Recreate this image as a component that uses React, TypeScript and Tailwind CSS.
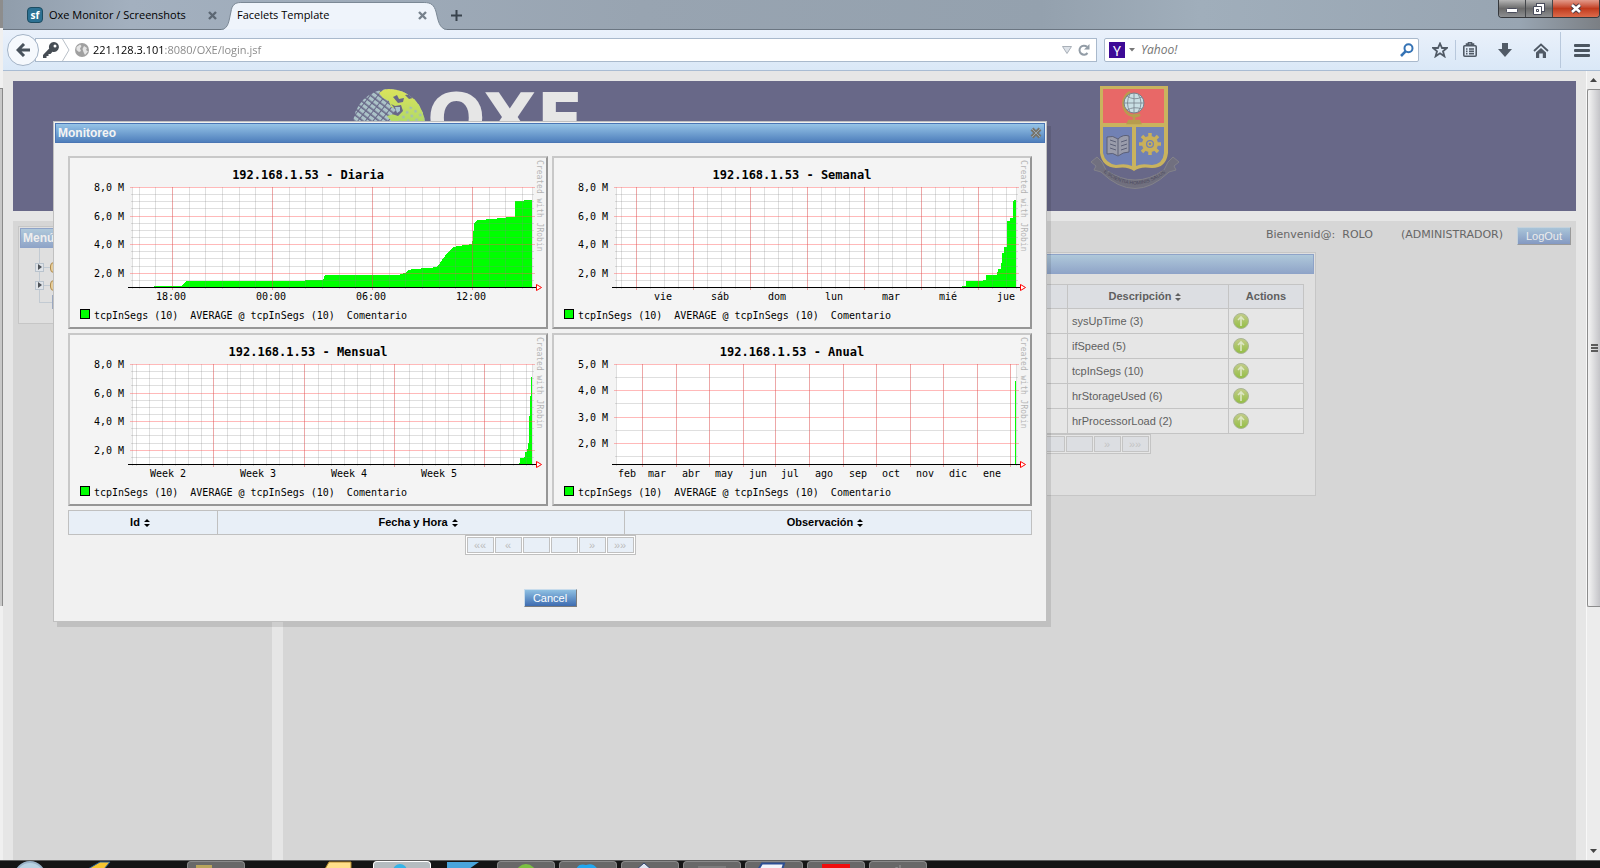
import React from "react";

type ChartProps = {
  title: string;
  yMajor: { y: number; label: string }[];
  yMinor: number[];
  xMajor: number[];
  xMinor: number[];
  xLabels: { x: number; label: string }[];
  area: string;
};

const range = (from: number, to: number, step: number) => {
  const out: number[] = [];
  for (let v = from; v <= to; v += step) out.push(Math.round(v));
  return out;
};

const millions = [
  { y: 31, label: "8,0 M" },
  { y: 60, label: "6,0 M" },
  { y: 88, label: "4,0 M" },
  { y: 117, label: "2,0 M" },
];
const halfMillions = [38, 45, 52, 67, 74, 81, 95, 102, 110, 124];

const charts: ChartProps[] = [
  {
    title: "192.168.1.53 - Diaria",
    yMajor: millions,
    yMinor: halfMillions,
    xMajor: [104, 204, 304, 404],
    xMinor: [71, 87, 121, 137, 154, 171, 187, 221, 237, 254, 271, 287, 321, 337, 354, 371, 387, 421, 437, 454],
    xLabels: [
      { x: 103, label: "18:00" },
      { x: 203, label: "00:00" },
      { x: 303, label: "06:00" },
      { x: 403, label: "12:00" },
    ],
    area: "M86 131V130H114L118 125H237V124H255L257 119H330L337 117L340 114L345 113L360 112L369 111L372 107L377 100L385 91L397 89L404 88L405 83L406 67L410 64L425 63L433 62L443 61H447V45H456V44H464V131Z",
  },
  {
    title: "192.168.1.53 - Semanal",
    yMajor: millions,
    yMinor: halfMillions,
    xMajor: [84, 141, 198, 255, 312, 369, 426],
    xMinor: [69, 98, 112, 126, 155, 169, 183, 212, 226, 240, 269, 283, 297, 326, 340, 354, 383, 397, 411, 440, 454],
    xLabels: [
      { x: 111, label: "vie" },
      { x: 168, label: "sáb" },
      { x: 225, label: "dom" },
      { x: 282, label: "lun" },
      { x: 339, label: "mar" },
      { x: 396, label: "mié" },
      { x: 454, label: "jue" },
    ],
    area: "M410 131V130H414V125H431V124H434V119H445V116H446V113H449V107H450V97H452V91H455V65H458V62H461V45H462V44H464V131Z",
  },
  {
    title: "192.168.1.53 - Mensual",
    yMajor: millions,
    yMinor: halfMillions,
    xMajor: [145, 236, 326, 416],
    xMinor: range(68, 460, 13).filter((x) => ![145, 146, 237, 328, 419].includes(x)),
    xLabels: [
      { x: 100, label: "Week 2" },
      { x: 190, label: "Week 3" },
      { x: 281, label: "Week 4" },
      { x: 371, label: "Week 5" },
    ],
    area: "M451 131V130H452V125H456V124H457V119H459V116H460V110H461V83H462V63H463V44H464V131Z",
  },
  {
    title: "192.168.1.53 - Anual",
    yMajor: [
      { y: 31, label: "5,0 M" },
      { y: 57, label: "4,0 M" },
      { y: 84, label: "3,0 M" },
      { y: 110, label: "2,0 M" },
    ],
    yMinor: [44, 70, 97, 123],
    xMajor: [90, 124, 157, 191, 223, 257, 291, 324, 358, 391, 425, 458],
    xMinor: [],
    xLabels: [
      { x: 75, label: "feb" },
      { x: 105, label: "mar" },
      { x: 139, label: "abr" },
      { x: 172, label: "may" },
      { x: 206, label: "jun" },
      { x: 238, label: "jul" },
      { x: 272, label: "ago" },
      { x: 306, label: "sep" },
      { x: 339, label: "oct" },
      { x: 373, label: "nov" },
      { x: 406, label: "dic" },
      { x: 440, label: "ene" },
    ],
    area: "M463 131V48H464V131Z",
  },
];

const Chart = ({ title, yMajor, yMinor, xMajor, xMinor, xLabels, area }: ChartProps) => (
  <div className="border-2 border-t-[#c8c8c8] border-r-[#969696] border-b-[#969696] border-l-[#c8c8c8] bg-[#f4f4f4]">
    <svg viewBox="2 2 476 169" className="block w-full font-['DejaVu_Sans_Mono',monospace] text-[10px]">
      <rect x="64" y="31" width="401" height="100" fill="#fff" />
      <path d={area} fill="#00ff00" shapeRendering="crispEdges" />
      <g fill="#828282" fillOpacity="0.26">
        {yMinor.map((y) => (
          <rect key={y} x="63" y={y} width="403" height="1" />
        ))}
        {[64, ...xMinor, 464].map((x) => (
          <rect key={x} x={x} y="31" width="1" height="102" />
        ))}
      </g>
      <g fill="#ff5050" fillOpacity="0.4">
        {yMajor.map(({ y }) => (
          <rect key={y} x="62" y={y} width="405" height="1" />
        ))}
      </g>
      <g fill="#dc5050" fillOpacity="0.5">
        {xMajor.map((x) => (
          <rect key={x} x={x} y="31" width="1" height="103" />
        ))}
      </g>
      <rect x="60" y="131" width="408" height="1" fill="#000" />
      <path d="M468.5 128.5L473.5 131.5L468.5 134.5Z" fill="#fff" stroke="#ff0000" />
      <text x="240" y="23" textAnchor="middle" className="text-[12px] font-bold">
        {title}
      </text>
      {yMajor.map(({ y, label }) => (
        <text key={y} x="56" y={y + 4} textAnchor="end">
          {label}
        </text>
      ))}
      {xLabels.map(({ x, label }) => (
        <text key={x} x={x} y="144" textAnchor="middle">
          {label}
        </text>
      ))}
      <rect x="12.5" y="153.5" width="9" height="9" fill="#00ff00" stroke="#000" />
      <text x="26" y="163" xmlSpace="preserve">
        {"tcpInSegs (10)  AVERAGE @ tcpInSegs (10)  Comentario"}
      </text>
      <text transform="translate(469 4) rotate(90)" fill="#b4b4b4" className="text-[8px]">
        Created with JRobin
      </text>
    </svg>
  </div>
);

const SortIcon = () => (
  <svg viewBox="0 0 6 8" className="mr-1.5 ml-1 inline-block h-2 w-1.5" fill="currentColor">
    <path d="M0 3L3 0L6 3ZM0 5H6L3 8Z" />
  </svg>
);

const Pager = ({ dim = false }: { dim?: boolean }) => (
  <div
    className={
      dim
        ? "mx-auto flex w-fit gap-px border border-[#c4c4c4] bg-[#e6e6e6] p-px text-[#c4c4c4]"
        : "mx-auto flex w-fit gap-px border border-[#c0c0c0] bg-white p-px text-[#bcbcbc]"
    }
  >
    {["««", "«", "", "", "»", "»»"].map((label, i) => (
      <button
        key={i}
        type="button"
        aria-label={`Page control ${i + 1}`}
        className={
          dim
            ? "h-4 w-[27px] border border-[#c4c4c4] bg-[#dcdee2] text-[11px] leading-[14px]"
            : "h-4 w-[27px] border border-[#c0c0c0] bg-[#e8eff7] text-[11px] leading-[14px]"
        }
      >
        {label}
      </button>
    ))}
  </div>
);

const CloseMark = ({ className = "" }: { className?: string }) => (
  <svg viewBox="0 0 9 9" className={`h-[9px] w-[9px] ${className}`} stroke="currentColor" strokeWidth="2.4">
    <path d="M1 1L8 8M8 1L1 8" />
  </svg>
);

const TabBar = () => (
  <div className="flex h-[30px] items-end border-b border-[#6b7682] bg-[linear-gradient(90deg,#909dab_0,#a3b0bf_8%,#98a4b1_40%,#94a1ae_65%,#a0aebb_75%,#98a5b2_95%,#7b7f84_100%)]">
    <div className="flex h-[28px] w-[195px] items-center pl-6">
      <span className="flex h-4 w-4 items-center justify-center rounded-sm border border-[#1d4c61] bg-[#2c7193] text-[10px] font-bold text-white">
        sf
      </span>
      <span className="ml-1.5 text-[11px] whitespace-nowrap text-black">Oxe Monitor / Screenshots</span>
    </div>
    <button type="button" aria-label="Close tab" className="mb-[9px] ml-[10px] text-[#5c6773]">
      <CloseMark />
    </button>
    <div className="relative -mb-px ml-1 flex h-[28px] w-[226px] items-center pb-px pl-4">
      <svg viewBox="0 0 228 28" preserveAspectRatio="none" className="absolute inset-0 h-full w-full">
        <path
          d="M0 27.5C8 27 8 18 10 10C11 3 14 .5 20 .5H205C212 .5 215 3 217 10C219 18 220 27 228 27.5V28H0Z"
          fill="#eff4fb"
          stroke="#7a8794"
        />
        <rect y="27" x="3" width="222" height="1" fill="#eaf1fb" />
      </svg>
      <span className="relative text-[11px] text-black">Facelets Template</span>
      <button type="button" aria-label="Close tab" className="relative mr-[20px] ml-auto text-[#77818c]">
        <CloseMark />
      </button>
    </div>
    <button type="button" aria-label="New tab" className="mb-2 ml-1 text-[#39434d]">
      <svg viewBox="0 0 11 11" className="h-[11px] w-[11px]" stroke="currentColor" strokeWidth="2">
        <path d="M5.5 0V11M0 5.5H11" />
      </svg>
    </button>
    <div className="ml-auto flex h-[18px] self-start overflow-hidden rounded-b border border-t-0 border-[#35383c]">
      <button type="button" aria-label="Minimize" className="flex w-[27px] items-center justify-center border-r border-[#44474b] bg-linear-to-b from-[#b5b5b5] via-[#6a6a6a] via-50% to-[#8d8f91]">
        <svg viewBox="0 0 12 5" className="mt-1 h-[5px] w-3">
          <rect x=".5" y=".5" width="11" height="4" rx="1" fill="#fff" stroke="#4a4d5c" />
        </svg>
      </button>
      <button type="button" aria-label="Restore" className="flex w-[27px] items-center justify-center border-r border-[#44474b] bg-linear-to-b from-[#b5b5b5] via-[#6a6a6a] via-50% to-[#8d8f91]">
        <svg viewBox="0 0 12 12" className="h-3 w-3" fill="#fff" stroke="#4a4d5c">
          <rect x="3.5" y=".5" width="8" height="8" />
          <path d="M.5 3.500H8.500V11.500H.5ZM3.500 6.500V8.500H5.500V6.500Z" fillRule="evenodd" />
        </svg>
      </button>
      <button type="button" aria-label="Close" className="flex w-[46px] items-center justify-center bg-linear-to-b from-[#e29a8a] via-[#c03a1c] via-50% to-[#dc6a4a]">
        <svg viewBox="0 0 12 11" className="h-[11px] w-3" fill="none">
          <path d="M2 2L10 9M10 2L2 9" stroke="#4a3a44" strokeWidth="4.500" />
          <path d="M2 2L10 9M10 2L2 9" stroke="#fff" strokeWidth="2.600" />
        </svg>
      </button>
    </div>
  </div>
);

const NavBar = () => (
  <div className="flex h-[41px] items-center border-b border-[#a9bcd3] bg-linear-to-b from-[#eaf1fb] to-[#dae8f7]">
    <button
      type="button"
      aria-label="Back"
      className="z-10 ml-1 flex h-8 w-8 items-center justify-center rounded-full border border-[#a3b3c6] bg-[#f6f9fd] text-[#48525c]"
    >
      <svg viewBox="0 0 14 14" className="h-3.5 w-3.5" fill="none" stroke="currentColor" strokeWidth="3">
        <path d="M8 1L2 7L8 13M2 7H14" />
      </svg>
    </button>
    <div className="-ml-1 flex h-6 flex-1 items-center border border-[#a9b9cc] bg-white pl-[7px]">
      <svg viewBox="0 0 16 16" className="h-4 w-4" fill="#464d54">
        <path d="M11 0A5 5 0 0 0 6.200 6.600L0 13V16H3.500V14H5.500V12H7.500L9.500 9.800A5 5 0 1 0 11 0ZM12 2.500A1.500 1.500 0 1 1 12 5.500A1.500 1.500 0 0 1 12 2.500Z" />
      </svg>
      <svg viewBox="0 0 8 22" className="ml-[3px] h-[22px] w-2" fill="none" stroke="#b9c0c8">
        <path d="M.5 0L7 11L.5 22" />
      </svg>
      <svg viewBox="0 0 14 14" className="ml-[5px] h-3.5 w-3.5">
        <circle cx="7" cy="7" r="7" fill="#a0a0a0" />
        <path d="M1.500 4L5 1.500L6.500 3L5 5.500L6 8L4 9L1.500 7ZM9 3L12 5L11 7L13 8.500L10 12L8.500 9L7.500 6Z" fill="#e4e4e4" />
      </svg>
      <input
        aria-label="Address"
        defaultValue="221.128.3.101:8080/OXE/login.jsf"
        className="ml-1 flex-1 bg-[linear-gradient(90deg,#000_72px,#858585_72px)] bg-clip-text text-[11px] text-transparent outline-none"
      />
      <button type="button" aria-label="History">
        <svg viewBox="0 0 10 8" className="h-2 w-2.5" fill="#dde2e8" stroke="#a9b0b8">
          <path d="M.5 .5H9.500L5 7.500Z" />
        </svg>
      </button>
      <button type="button" aria-label="Reload" className="mr-1.5 ml-1.5">
        <svg viewBox="0 0 12 12" className="h-3 w-3" fill="none" stroke="#929ca6" strokeWidth="2">
          <path d="M9.500 9A4.500 4.500 0 1 1 9 2.800" />
          <path d="M11.500 0V5.500H6Z" fill="#929ca6" stroke="none" />
        </svg>
      </button>
    </div>
    <div className="ml-[7px] flex h-6 w-[315px] items-center rounded-xs border border-[#a9b9cc] bg-white pl-1">
      <span className="flex h-4 w-4 items-center justify-center bg-[#3d0a96] font-['Noto_Sans',sans-serif] text-[14px] text-white">Y</span>
      <svg viewBox="0 0 6 4" className="ml-1 h-1 w-1.5" fill="#777">
        <path d="M0 0H6L3 3.500Z" />
      </svg>
      <input
        aria-label="Search"
        placeholder="Yahoo!"
        className="ml-1.5 min-w-0 flex-1 text-[12px] italic outline-none placeholder:text-[#757575]"
      />
      <svg viewBox="0 0 14 14" className="mr-1 h-3.5 w-3.5" fill="none" stroke="#3573b5" strokeWidth="2">
        <circle cx="8.500" cy="5.300" r="4" />
        <path d="M5.500 8.300L1 13" strokeWidth="2.600" />
      </svg>
    </div>
    <div className="ml-[13px] flex items-center text-[#505a66]">
      <button type="button" aria-label="Bookmark">
        <svg viewBox="0 0 16 16" className="h-4 w-4" fill="none" stroke="currentColor" strokeWidth="1.800">
          <path d="M8 1.500L10 6H14.800L11 9.200L12.400 14.300L8 11.300L3.600 14.300L5 9.200L1.200 6H6Z" />
        </svg>
      </button>
      <span className="ml-[7px] h-5 w-px bg-[#b8c8dc]" />
      <button type="button" aria-label="Bookmarks list" className="ml-[7px]">
        <svg viewBox="0 0 14 16" className="h-4 w-3.5" fill="none" stroke="currentColor" strokeWidth="1.600">
          <rect x=".8" y="3.800" width="12.400" height="10.400" rx="1" />
          <path d="M3.500 3V2H5.500V.8H8.500V2H10.500V3ZM3 7H4.500M6 7H11M3 9.300H4.500M6 9.300H11M3 11.600H4.500M6 11.600H11" />
        </svg>
      </button>
      <button type="button" aria-label="Downloads" className="ml-[21px]">
        <svg viewBox="0 0 14 14" className="h-3.5 w-3.5" fill="currentColor">
          <path d="M4 0H10V6H14L7 14L0 6H4Z" />
        </svg>
      </button>
      <button type="button" aria-label="Home" className="ml-[21px]">
        <svg viewBox="0 0 16 15" className="h-[15px] w-4" fill="none" stroke="currentColor" strokeWidth="1.800">
          <path d="M1 8L8 1.500L15 8" />
          <path d="M8 5L13 9.500V15H9.800V10.500H6.200V15H3V9.500Z" fill="currentColor" stroke="none" />
        </svg>
      </button>
    </div>
    <span className="ml-[11px] h-9 w-px bg-[#b8c8dc]" />
    <button type="button" aria-label="Menu" className="mr-2.5 ml-[13px] text-[#4b5560]">
      <svg viewBox="0 0 16 13" className="h-[13px] w-4" fill="currentColor">
        <rect width="16" height="3" rx="1" />
        <rect y="5" width="16" height="3" rx="1" />
        <rect y="10" width="16" height="3" rx="1" />
      </svg>
    </button>
  </div>
);

const GlobeLogo = () => (
  <svg viewBox="0 0 72 72" className="h-[72px] w-[72px]">
    <defs>
      <clipPath id="globe">
        <circle cx="36" cy="36" r="36" />
      </clipPath>
      <linearGradient id="land" x1="0" y1="0" x2="0" y2="1">
        <stop offset="0" stopColor="#dbe35c" />
        <stop offset=".6" stopColor="#a5d867" />
      </linearGradient>
      <pattern id="tiles" width="6" height="5" patternUnits="userSpaceOnUse" patternTransform="rotate(38)">
        <rect width="5" height="3.400" fill="#abc3c8" />
      </pattern>
      <pattern id="dots" width="6" height="6" patternUnits="userSpaceOnUse" patternTransform="rotate(38)">
        <circle cx="3" cy="3" r="1.500" fill="#a4bfae" />
      </pattern>
    </defs>
    <g clipPath="url(#globe)">
      <rect width="72" height="72" fill="url(#tiles)" />
      <path
        d="M26 4L32 0H50L57 8L62 7L72 28V72H44L40 34L34 27L41 25L44 20L38 18L36 12L30 9Z"
        fill="url(#land)"
      />
      <path d="M44 28L54 16L72 24V72H46Z" fill="url(#dots)" />
      <path
        d="M40 8L44 6L46 10L51 9L50 13L45 14ZM52 6L58 5L60 9L56 10ZM38 15L42 17L48 16L50 22L45 27L39 25L43 21Z"
        fill="#686888"
      />
      <path d="M42 18H47V22L44 24Z" fill="#a9c6cf" />
    </g>
  </svg>
);

const Crest = () => (
  <svg viewBox="0 0 90 106" className="h-[106px] w-[90px]">
    <path
      d="M1 76L7 71L12 76L16 84Q45 104 74 84L78 76L83 71L89 76L84 80L86 84L79 86Q45 119 11 86L4 84L6 80Z"
      fill="#71707f"
      stroke="#83828a"
    />
    <path id="ribbon" d="M11 84Q45 113 79 84" fill="none" />
    <text fill="#4c4a5e" className="text-[5px]">
      <textPath href="#ribbon" startOffset="3">
        E SCIENTIA HOMINIS SALUS
      </textPath>
    </text>
    <path d="M10 0H78V67Q76 82 62 82Q50 80 44 85Q38 80 26 82Q12 81 10 67Z" fill="#c9b35e" />
    <rect x="13" y="3" width="61" height="34" fill="#e86867" />
    <path d="M13 41H42V80Q36 77 26 79Q15 77 13 67Z" fill="#7181b4" />
    <path d="M46 41H74V67Q73 78 62 79Q51 77 46 80Z" fill="#7181b4" />
    <path d="M40 6A11 12 0 0 0 50 29H44V35H39L38 37H50L49 35H45" fill="none" stroke="#b79d4e" strokeWidth="2.400" />
    <circle cx="44" cy="17" r="10" fill="#c9dfe4" stroke="#77828c" />
    <path d="M34 17H54M44 7V27M37 10Q44 15 52 11M37 24Q44 20 52 23M40 8Q35 17 40 26M48 8Q54 17 48 26" fill="none" stroke="#77828c" strokeWidth=".8" />
    <path d="M17 51Q23 49 28 53Q33 48 39 50V66Q33 66 28 70Q23 66 17 68Z" fill="#9a9cab" stroke="#5c6077" />
    <path d="M28 53V69M20 54L26 56M20 58L26 60M20 62L26 64M31 56L37 54M31 60L37 58M31 64L37 62" stroke="#5c6077" />
    <g stroke="#c9b05a" fill="none">
      <circle cx="60" cy="58" r="6" strokeWidth="4" />
      <path d="M60 47V52M60 64V69M49 58H54M66 58H71M52 50L56 54M64 62L68 66M68 50L64 54M56 62L52 66" strokeWidth="3.500" />
      <circle cx="60" cy="58" r="2" strokeWidth="1.500" />
    </g>
  </svg>
);

const TreeToggle = () => (
  <button type="button" aria-label="Expand" className="flex h-[9px] w-[9px] items-center justify-center border border-[#b9c3cd] bg-[#dfe3e8]">
    <svg viewBox="0 0 4 6" className="h-1.5 w-1" fill="#4d5258">
      <path d="M0 0L4 3L0 6Z" />
    </svg>
  </button>
);

const SideMenu = () => (
  <aside className="w-[259px] bg-[#d6d6d6] px-[5px] pt-[5px]">
    <div className="h-[98px] border border-[#c6c6c6] bg-[#dfdfdf] p-px">
      <h2 className="h-5 border border-[#8ea3c8] bg-linear-to-b from-[#afc8da] to-[#90a5c8] pl-[2px] text-[12px] leading-[18px] font-bold text-[#eeeeee]">
        Menú
      </h2>
      <div className="ml-[19px] border-l border-[#c2cad2] pt-[10px]">
        {[0, 1].map((i) => (
          <div key={i} className="-ml-[5px] flex h-[18px] items-center">
            <TreeToggle />
            <span className="h-px w-[6px] bg-[#c2cad2]" />
            <span className="h-[11px] w-3.5 rounded-l-sm border border-[#b08d50] bg-[#e6cd9b]" />
          </div>
        ))}
        <div className="flex h-[9px] items-end">
          <span className="h-px w-3 bg-[#c2cad2]" />
          <span className="-mb-1.5 h-3.5 w-3 shrink-0 border border-[#9ba8c0] bg-[#e3e6ea]" />
        </div>
      </div>
    </div>
  </aside>
);

const variables = ["sysUpTime (3)", "ifSpeed (5)", "tcpInSegs (10)", "hrStorageUsed (6)", "hrProcessorLoad (2)"];

const VariablesPanel = () => (
  <section className="h-[244px] w-[502px] border border-[#c6c6c6] bg-[#dfdfdf] p-px">
    <div className="h-5 border border-[#8ea3c8] bg-linear-to-b from-[#afc8da] to-[#90a5c8]" />
    <div className="px-2.5 pt-2.5">
      <table className="w-full table-fixed border-collapse text-[11px] text-[#5f5f5f]">
        <thead>
          <tr className="h-6 bg-[#dcdee2]">
            <th className="border border-[#c4c4c4]" />
            <th className="w-[161px] border border-[#c4c4c4]">
              Descripción
              <SortIcon />
            </th>
            <th className="w-[75px] border border-[#c4c4c4]">Actions</th>
          </tr>
        </thead>
        <tbody className="bg-[#e6e6e6]">
          {variables.map((name) => (
            <tr key={name} className="h-[25px]">
              <td className="border border-[#c4c4c4]" />
              <td className="border border-[#c4c4c4] pl-1">{name}</td>
              <td className="border border-[#c4c4c4] pl-1">
                <button type="button" aria-label={`Monitor ${name}`} className="block">
                  <svg viewBox="0 0 16 16" className="h-4 w-4">
                    <defs>
                      <linearGradient id="orb" x1="0" y1="0" x2="0" y2="1">
                        <stop offset="0" stopColor="#c4cd8c" />
                        <stop offset="1" stopColor="#92bd42" />
                      </linearGradient>
                    </defs>
                    <circle cx="8" cy="8" r="7.500" fill="url(#orb)" stroke="#a9b595" />
                    <path d="M8 13V4M5 7L8 4L11 7" fill="none" stroke="#dde6c4" strokeWidth="1.600" />
                  </svg>
                </button>
              </td>
            </tr>
          ))}
        </tbody>
      </table>
      <Pager dim />
    </div>
  </section>
);

const MonitorDialog = () => (
  <div
    role="dialog"
    aria-label="Monitoreo"
    className="absolute top-[50px] left-[50px] w-[994px] max-w-full border border-[#c0c0c0] bg-[#f1f1f1] p-px pb-3.5 shadow-[4px_5px_0_#0000001a]"
  >
    <div className="flex h-5 items-center justify-between border border-[#4a76b4] bg-linear-to-b from-[#96c4e6] to-[#4f7fbc] pr-0.5 pl-[2px]">
      <h2 className="text-[12px] font-bold text-[#f4f4f4]">Monitoreo</h2>
      <button type="button" aria-label="Close dialog" className="text-[#77756c]">
        <svg viewBox="0 0 12 12" className="h-3 w-3" fill="none">
          <path d="M2 2L10 10M10 2L2 10" stroke="currentColor" strokeWidth="4" />
          <path d="M2 2L10 10M10 2L2 10" stroke="#98a7b3" />
        </svg>
      </button>
    </div>
    <div className="px-[13px] pt-[13px]">
      <div className="grid grid-cols-2 gap-1">
        {charts.map((chart) => (
          <Chart key={chart.title} {...chart} />
        ))}
      </div>
      <table className="mt-1 w-full table-fixed border-collapse text-[11px] text-black">
        <thead>
          <tr className="h-6 bg-[#e8eff7]">
            <th className="w-[149px] border border-[#c0c0c0]">
              Id
              <SortIcon />
            </th>
            <th className="border border-[#c0c0c0]">
              Fecha y Hora
              <SortIcon />
            </th>
            <th className="border border-[#c0c0c0]">
              Observación
              <SortIcon />
            </th>
          </tr>
        </thead>
      </table>
      <Pager />
      <button
        type="button"
        className="mx-auto mt-[34px] block h-[18px] w-[53px] border border-t-[#c8dcec] border-r-[#7c7c7c] border-b-[#7c7c7c] border-l-[#c8dcec] bg-linear-to-b from-[#8fc0e2] to-[#3f6cb0] text-[11px] leading-4 text-white"
      >
        Cancel
      </button>
    </div>
  </div>
);

const Scrollbar = () => (
  <div className="flex w-[14px] flex-col items-center border-l border-[#f8f8f8] bg-[#ececec]">
    <svg viewBox="0 0 7 4" className="mt-[7px] h-1 w-[7px]" fill="#444">
      <path d="M0 4L3.500 0L7 4Z" />
    </svg>
    <div className="mt-[7px] flex h-[518px] w-full flex-col items-center justify-center gap-px rounded-l-xs border border-r-0 border-[#8c8c8c] bg-linear-to-r from-[#f4f4f4] to-[#c4c4c8]">
      <span className="h-[2px] w-[7px] bg-[#5c5c5c]" />
      <span className="h-[2px] w-[7px] bg-[#5c5c5c]" />
      <span className="h-[2px] w-[7px] bg-[#5c5c5c]" />
    </div>
    <svg viewBox="0 0 7 4" className="mt-auto mb-[7px] h-1 w-[7px]" fill="#444">
      <path d="M0 0L3.500 4L7 0Z" />
    </svg>
  </div>
);

const taskStyles = {
  open: "h-2 w-[58px] shrink-0 rounded-t-sm border border-b-0 border-[#8a8a8a] bg-[#686868]",
  active: "h-2 w-[58px] shrink-0 rounded-t-sm border border-b-0 border-white bg-[#b5bcc0]",
  idle: "h-2 w-[58px] shrink-0 bg-[#151515]",
};

const tasks: { name: string; look: keyof typeof taskStyles; icon: React.ReactNode }[] = [
  { name: "Folder", look: "open", icon: <rect x="8" y="3" width="16" height="5" fill="#b9a55c" /> },
  { name: "Pinned", look: "idle", icon: null },
  { name: "Explorer", look: "idle", icon: <path d="M14 8L18 1H40V8Z" fill="#ffe08a" stroke="#b58a2c" /> },
  { name: "Browser", look: "active", icon: <circle cx="26" cy="9" r="7" fill="#35b4e8" /> },
  { name: "Editor", look: "idle", icon: <path d="M12 1H44L34 8H12Z" fill="#4aa5dc" /> },
  { name: "Chat", look: "open", icon: <circle cx="28" cy="12" r="10" fill="#7cc142" /> },
  { name: "Calls", look: "open", icon: <path d="M16 8Q18 1 26 3Q34 0 38 8Z" fill="#22a7f0" /> },
  { name: "Box", look: "open", icon: <path d="M14 8L22 1L30 8Z" fill="#dfe6f2" stroke="#31466e" /> },
  { name: "Console", look: "open", icon: <rect x="14" y="4" width="28" height="4" fill="#7c7c7c" /> },
  { name: "Writer", look: "open", icon: <path d="M12 8L16 1.500H38L36 8Z" fill="#f2f5fb" stroke="#2d4f94" strokeWidth="2" /> },
  { name: "Reader", look: "open", icon: <rect x="14" y="2" width="28" height="6" fill="#f00d0d" /> },
  { name: "Java", look: "open", icon: <path d="M24 8Q26 3 30 8M30 3V8" stroke="#999" fill="none" /> },
];

const Taskbar = () => (
  <div className="flex h-2 gap-1 overflow-hidden border-t border-[#5d5d5d] bg-[#151515] pl-3.5">
    <button type="button" aria-label="Start" className="h-8 w-8 shrink-0 rounded-full border-2 border-[#9bb4c9] bg-[#b9d2e2]" />
    <svg viewBox="0 0 97 8" className="ml-9 h-2 w-[97px] shrink-0">
      <path d="M2 8L14 1H24L18 8Z" fill="#f4c430" stroke="#25609c" />
    </svg>
    {tasks.map(({ name, look, icon }) => (
      <button key={name} type="button" aria-label={name} className={taskStyles[look]}>
        <svg viewBox="0 0 56 8" className="block h-2 w-14">
          {icon}
        </svg>
      </button>
    ))}
  </div>
);

const App = () => {
  return (
    <div className="flex h-screen flex-col overflow-hidden bg-[#e6e6e6] font-['Liberation_Sans',Arial,sans-serif]">
      <div className="flex min-h-0 flex-1">
        <div className="flex w-[3px] flex-col bg-[#f0f0f0]">
          <div className="h-7 bg-[#8d8d8d]" />
          <div className="mt-[60px] h-[518px] border-t border-r border-[#8a8a8a] bg-[#c8c8c8]" />
        </div>
        <div className="flex min-w-0 flex-1 flex-col">
          <div className="font-['Open_Sans',sans-serif]">
            <TabBar />
            <NavBar />
          </div>
          <div className="flex min-h-0 flex-1">
            <main className="relative flex min-w-0 flex-1 flex-col gap-2.5 overflow-hidden px-2.5 pt-2.5">
              <header className="flex h-[130px] shrink-0 items-start bg-[#686888]">
                <div className="ml-[340px] flex pt-2">
                  <GlobeLogo />
                  <span className="ml-0.5 font-['DejaVu_Sans',sans-serif] text-[69px] leading-[60px] font-bold text-[#e6e6e6]">
                    OXE
                  </span>
                </div>
                <div className="mt-[5px] mr-[396px] ml-auto">
                  <Crest />
                </div>
              </header>
              <div className="flex min-h-0 flex-1 gap-[11px]">
                <SideMenu />
                <section className="flex-1 bg-[#d6d6d6]">
                  <div className="flex h-[31px] items-center justify-end pr-[5px] pb-0.5 text-[#666666]">
                    <p className="font-['DejaVu_Sans',sans-serif] text-[11px] whitespace-pre">
                      <span>Bienvenid@:</span>
                      <span className="ml-[7px]">ROLO</span>
                      <span className="ml-[28px]">(ADMINISTRADOR)</span>
                    </p>
                    <button
                      type="button"
                      className="ml-3.5 h-[18px] w-[54px] border border-t-[#c4d2dc] border-r-[#9a9a9a] border-b-[#9a9a9a] border-l-[#c4d2dc] bg-linear-to-b from-[#a9c4d8] to-[#8499c2] text-[11px] leading-4 text-[#ececec]"
                    >
                      LogOut
                    </button>
                  </div>
                  <div className="flex justify-end pr-[260px]">
                    <VariablesPanel />
                  </div>
                </section>
              </div>
              <MonitorDialog />
            </main>
            <Scrollbar />
          </div>
        </div>
      </div>
      <Taskbar />
    </div>
  );
};

export default App;
